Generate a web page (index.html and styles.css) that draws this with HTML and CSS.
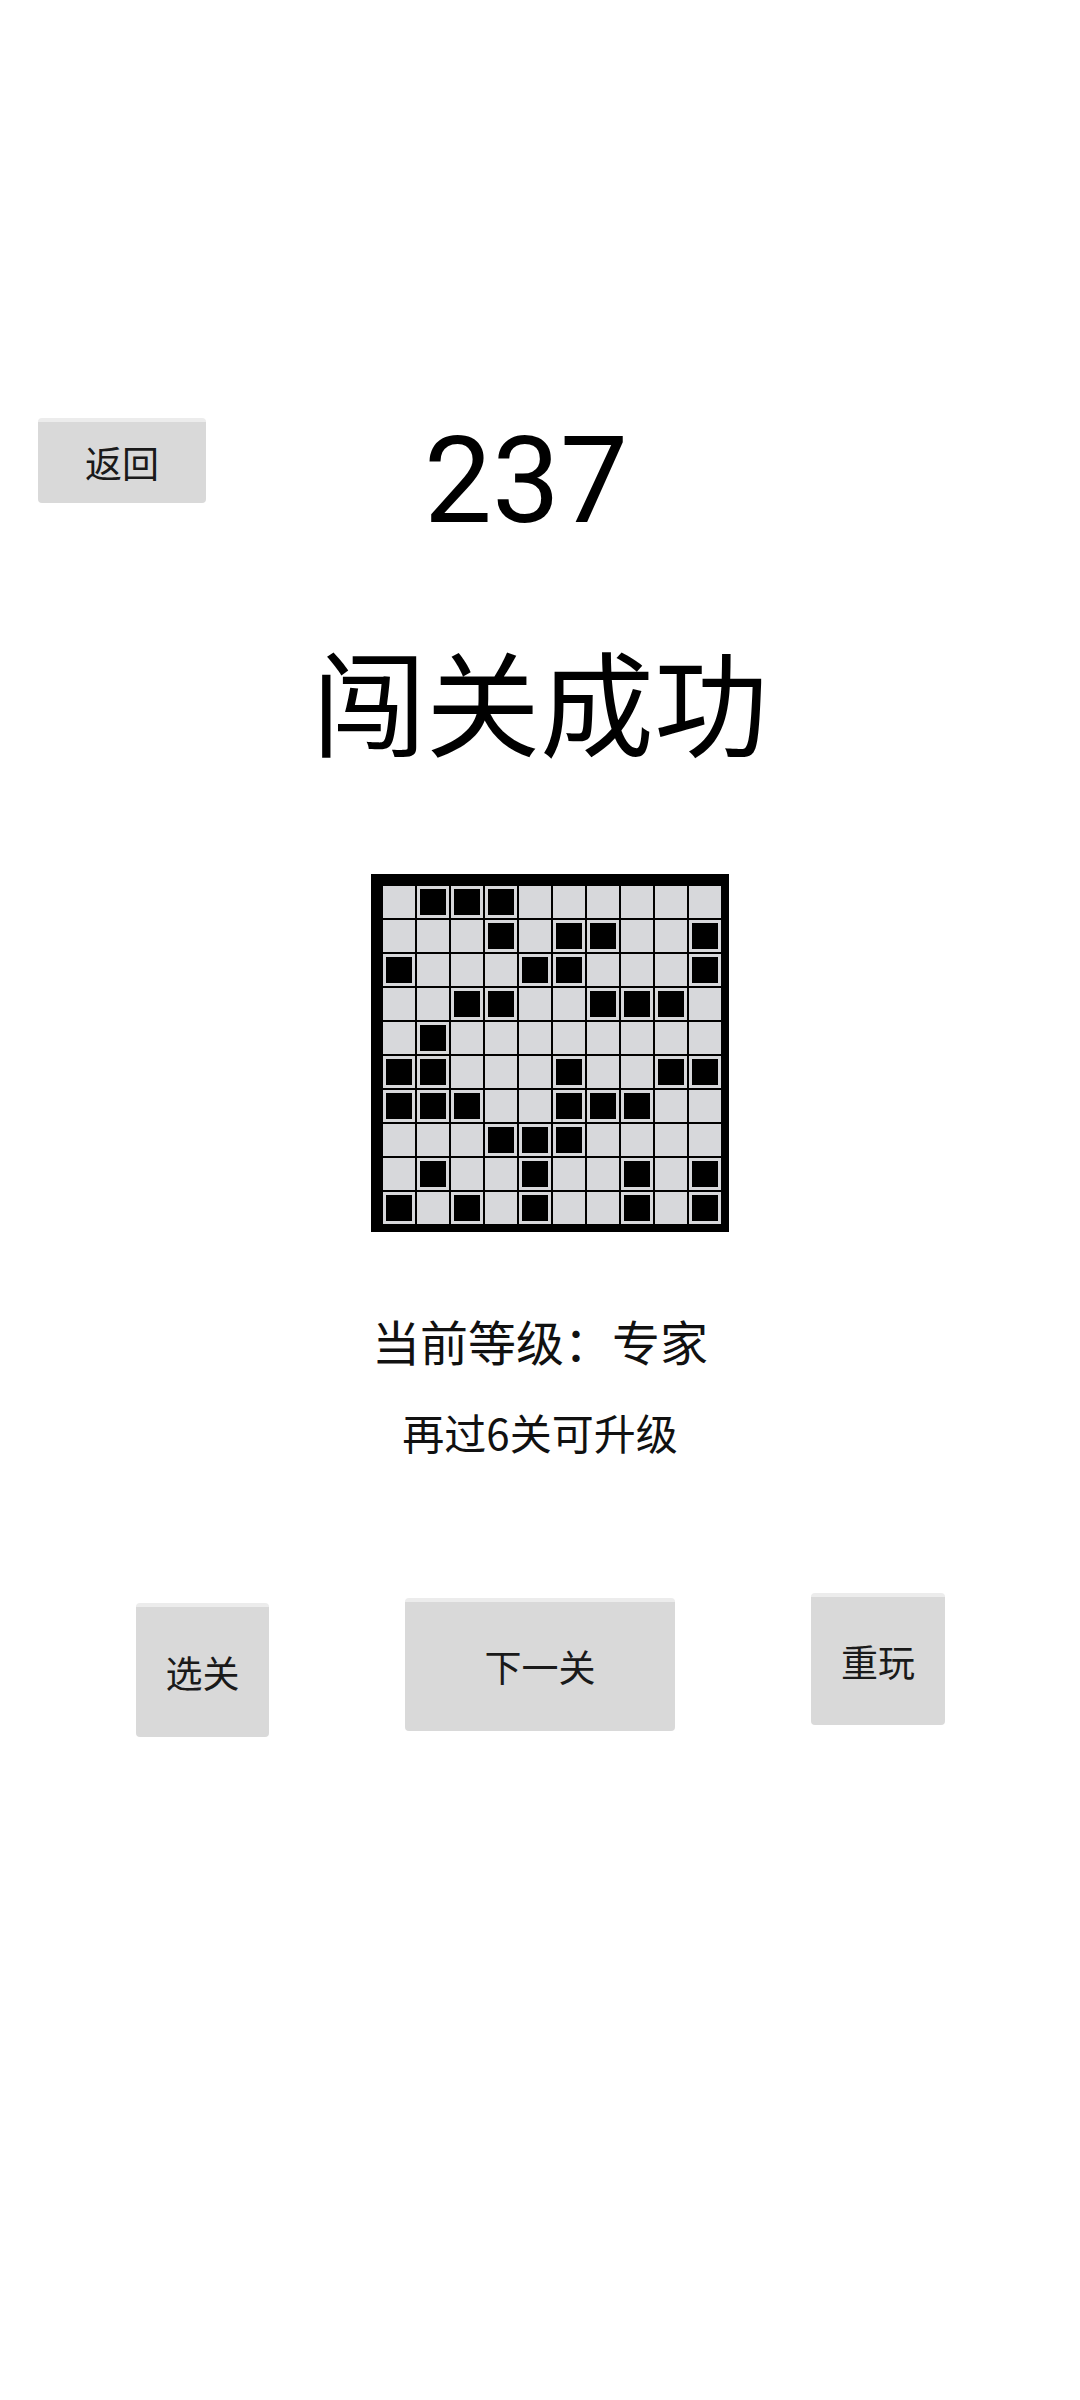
FILE: index.html
```html
<!DOCTYPE html>
<html lang="zh-CN">
<head>
    <meta charset="UTF-8">
    <meta name="viewport" content="width=device-width, initial-scale=1.0">
    <title>闯关成功</title>
    <link rel="stylesheet" href="styles.css">
</head>
<body>
    <div class="page">
        <!-- Header -->
        <div class="header">
            <button class="btn btn-back">返回</button>
            <div class="level-no">237</div>
        </div>

        <h1 class="title">闯关成功</h1>

        <!-- Solved board -->
        <div class="board-wrap">
            <div class="board" id="board"></div>
        </div>

        <p class="rank">当前等级：专家</p>
        <p class="hint">再过6关可升级</p>

        <div class="actions">
            <button class="btn btn-select">选关</button>
            <button class="btn btn-next">下一关</button>
            <button class="btn btn-replay">重玩</button>
        </div>
    </div>

    <script>
        // 1 = 黑格
        const pattern = [
            "0111000000",
            "0001011001",
            "1000110001",
            "0011001110",
            "0100000000",
            "1100010011",
            "1110011100",
            "0001110000",
            "0100100101",
            "1010100101"
        ];

        const board = document.getElementById("board");
        pattern.forEach(row => {
            for (let ch of row) {
                let cell = document.createElement("div");
                cell.className = ch === "1" ? "cell filled" : "cell";
                board.appendChild(cell);
            }
        });
    </script>
</body>
</html>
```

FILE: styles.css
```css
/* General */
* {
    margin: 0;
    padding: 0;
    box-sizing: border-box;
}

body {
    font-family: "Noto Sans CJK SC", "Noto Sans", sans-serif;
    background: #fff;
    color: #111;
}

.page {
    width: 1080px;
    padding-top: 418px;
}

/* Buttons */
.btn {
    font-family: "Noto Sans CJK SC", sans-serif;
    font-size: 37px;
    color: #1a1a1a;
    background: #d9d9d9;
    border: none;
    border-top: 4px solid #ececec;
    border-radius: 4px;
    display: flex;
    justify-content: center;
    align-items: center;
    line-height: 1;
}

/* Header */
.header {
    display: flex;
    align-items: flex-start;
    padding-left: 38px;
}

.btn-back {
    width: 168px;
    height: 85px;
}

.level-no {
    flex: 1;
    font-family: Roboto, sans-serif;
    font-size: 121px;
    line-height: 1;
    color: #000;
    text-align: center;
    margin-top: 3px;
    padding-right: 234px;
}

/* Title */
.title {
    font-size: 114px;
    font-weight: 400;
    line-height: 1;
    text-align: center;
    color: #000;
    margin-top: 100px;
}

/* Board */
.board-wrap {
    display: flex;
    justify-content: center;
    margin-top: 118px;
    padding-left: 20px;
}

.board {
    display: grid;
    grid-template-columns: repeat(10, 32px);
    grid-auto-rows: 32px;
    gap: 2px;
    background: #000;
    padding: 12px 8px 8px 12px;
}

.cell {
    background: #d7d8db;
}

.cell.filled {
    background: #000;
    box-shadow: inset 0 0 0 3px #d7d8db;
}

/* Rank */
.rank {
    font-size: 48px;
    line-height: 1;
    text-align: center;
    margin-top: 84px;
}

.hint {
    font-size: 42px;
    line-height: 1;
    text-align: center;
    margin-top: 47px;
}

/* Bottom actions */
.actions {
    display: flex;
    align-items: flex-start;
    gap: 136px;
    padding-left: 136px;
    margin-top: 140px;
}

.btn-select {
    width: 133px;
    height: 134px;
    margin-top: 10px;
}

.btn-next {
    width: 270px;
    height: 133px;
    margin-top: 5px;
}

.btn-replay {
    width: 134px;
    height: 132px;
}
```
